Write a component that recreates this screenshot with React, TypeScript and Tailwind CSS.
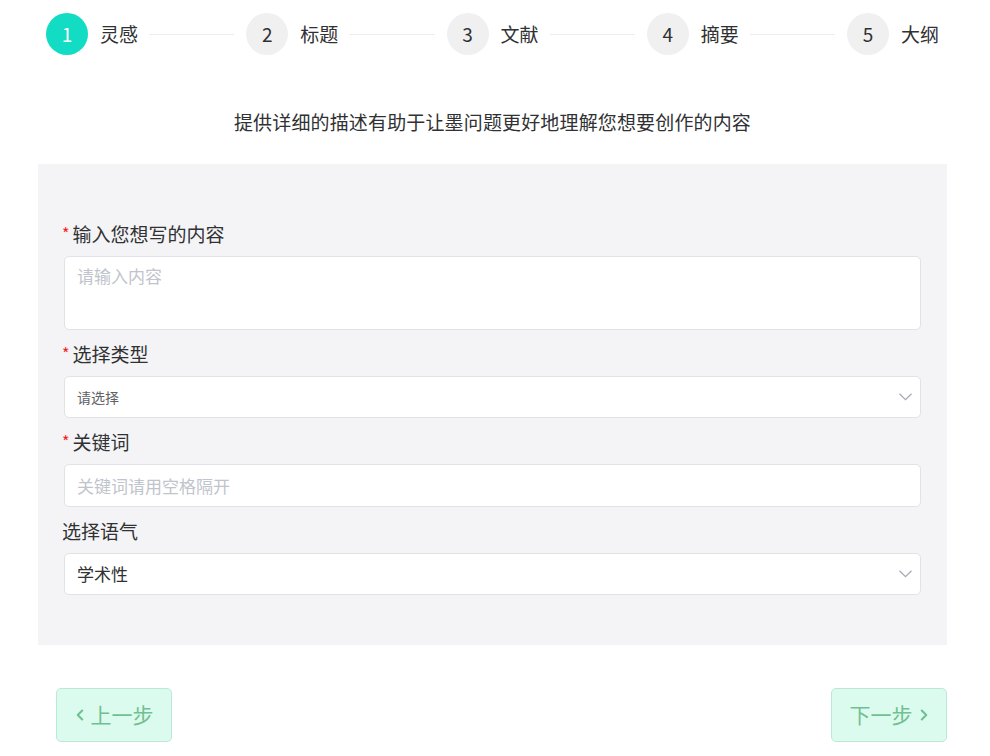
import { ChevronLeft, ChevronRight } from "lucide-react";

const steps = ["灵感", "标题", "文献", "摘要", "大纲"];

function Steps() {
  return (
    <div className="flex items-center px-2 pt-[13px]">
      {steps.map((label, i) => {
        const active = i === 0;
        const last = i === steps.length - 1;
        return (
          <div key={label} className={last ? "flex items-center" : "flex flex-1 items-center"}>
            <div
              className={
                active
                  ? "flex h-[42px] w-[42px] items-center justify-center rounded-full bg-[#12dcc3] text-[19px] text-white"
                  : "flex h-[42px] w-[42px] items-center justify-center rounded-full bg-[#f0f0f0] text-[19px] text-[#303133]"
              }
            >
              {i + 1}
            </div>
            <span className="ml-3 text-[19px] leading-6 text-[#303133]">{label}</span>
            {!last && <div className="ml-[11px] mr-3 h-px flex-1 bg-[#ebedf0]" />}
          </div>
        );
      })}
    </div>
  );
}

function Label({ text, required }: { text: string; required?: boolean }) {
  return (
    <div className="mb-[10px] flex h-6 items-center text-[19px] leading-6 text-[#303133]">
      {required && <span className="mr-[3px] -mt-[3px] text-[16px] text-[#f52222]">*</span>}
      {text}
    </div>
  );
}

function Caret() {
  return (
    <svg width="13" height="8" viewBox="0 0 13 8" fill="none" className="text-[#a8abb2]">
      <path d="M0.5 0.8 L6.5 6.6 L12.5 0.8" stroke="currentColor" strokeWidth="1.3" />
    </svg>
  );
}

function SelectBox({ value, small }: { value: string; small?: boolean }) {
  return (
    <div className="mx-[2px] flex h-[42px] items-center justify-between rounded-[5px] border border-[#e0e2e7] bg-white pl-3 pr-[8px]">
      <span className={small ? "text-[14px] text-[#606266]" : "text-[17px] text-[#303133]"}>{value}</span>
      <Caret />
    </div>
  );
}

export default function App() {
  return (
    <div
      className="min-h-screen bg-white"
      style={{ fontFamily: '"Noto Sans CJK SC", "Noto Sans", sans-serif' }}
    >
      <div className="ml-[38px] w-[909px]">
        <Steps />
        <p className="mt-[54px] text-center text-[19px] leading-[26px] tracking-[0.15px] text-[#303133]">
          提供详细的描述有助于让墨问题更好地理解您想要创作的内容
        </p>
        <div className="mt-[29px] bg-[#f4f4f6] px-6 pb-[50px] pt-[58px]">
          <Label text="输入您想写的内容" required />
          <textarea
            placeholder="请输入内容"
            className="mx-[2px] block h-[74px] w-[calc(100%-4px)] resize-none rounded-[5px] border border-[#e0e2e7] bg-white px-3 py-[6px] text-[17px] text-[#303133] outline-none placeholder:text-[#c0c4cc]"
          />
          <div className="mt-3">
            <Label text="选择类型" required />
            <SelectBox value="请选择" small />
          </div>
          <div className="mt-3">
            <Label text="关键词" required />
            <input
              placeholder="关键词请用空格隔开"
              className="mx-[2px] block h-[43px] w-[calc(100%-4px)] rounded-[5px] border border-[#e0e2e7] bg-white px-3 text-[17px] text-[#303133] outline-none placeholder:text-[#c0c4cc]"
            />
          </div>
          <div className="mt-3">
            <Label text="选择语气" />
            <SelectBox value="学术性" />
          </div>
        </div>
        <div className="mt-[43px] flex justify-between pl-[18px]">
          <button className="flex h-[54px] w-[116px] items-center justify-center rounded-[5px] border border-[#bde8d5] bg-[#dafbee] text-[21px] text-[#72bf92]">
            <ChevronLeft size={18} strokeWidth={2.75} className="-ml-1 mr-[2px]" />
            上一步
          </button>
          <button className="flex h-[54px] w-[116px] items-center justify-center rounded-[5px] border border-[#bde8d5] bg-[#dafbee] text-[21px] text-[#72bf92]">
            下一步
            <ChevronRight size={18} strokeWidth={2.75} className="-mr-1 ml-[2px]" />
          </button>
        </div>
      </div>
    </div>
  );
}
